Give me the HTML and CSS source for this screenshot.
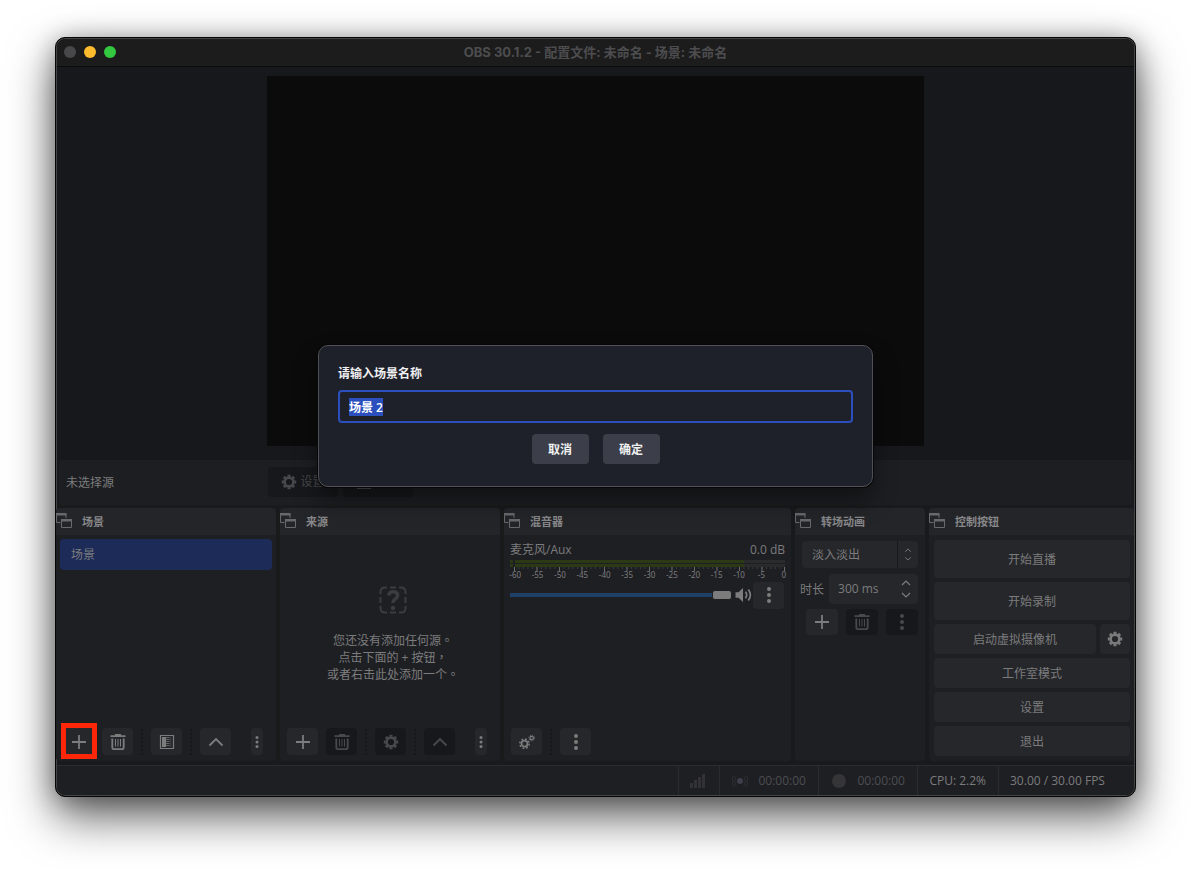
FILE: index.html
```html
<!DOCTYPE html>
<html lang="zh-CN">
<head>
<meta charset="utf-8">
<title>OBS 30.1.2</title>
<link rel="stylesheet" href="styles.css">
</head>
<body>
<svg class="sprite" aria-hidden="true">
  <symbol id="i-plus" viewBox="0 0 16 16"><path d="M8 1v14M1 8h14" fill="none" stroke="currentColor" stroke-width="1.8"/></symbol>
  <symbol id="i-trash" viewBox="0 0 16 16"><path d="M.5 2.2h15M5 1h6" fill="none" stroke="currentColor" stroke-width="1.8"/><path d="M2.3 4.5v9q0 1.7 1.7 1.7h8q1.7 0 1.7-1.7v-9" fill="none" stroke="currentColor" stroke-width="1.8"/><path d="M5.5 5v7.5M8 5v7.5M10.500 5v7.5" fill="none" stroke="currentColor"/></symbol>
  <symbol id="i-filter" viewBox="0 0 16 16"><path d="M1.500 1.500h13v13h-13z" fill="none" stroke="currentColor" stroke-width="1.200"/><path d="M3 3h4v10H3z" fill="currentColor"/><path d="M7.500 3v10M9.500 3v10" stroke="currentColor" stroke-dasharray="1 1" stroke-width="2" opacity=".7"/><path d="M11.500 3v10" stroke="currentColor" opacity=".3"/></symbol>
  <symbol id="i-up" viewBox="0 0 16 16"><path d="M1.500 11.500 8 5l6.500 6.500" fill="none" stroke="currentColor" stroke-width="1.800"/></symbol>
  <symbol id="i-dots" viewBox="0 0 16 16"><circle cx="8" cy="2" r="2" fill="currentColor"/><circle cx="8" cy="8" r="2" fill="currentColor"/><circle cx="8" cy="14" r="2" fill="currentColor"/></symbol>
  <symbol id="i-gear" viewBox="0 0 16 16"><circle cx="8" cy="8" r="4.400" fill="none" stroke="currentColor" stroke-width="2.600"/><path d="M8 .8v2M8 13.200v2M.8 8h2M13.200 8h2M2.900 2.900l1.400 1.400M11.700 11.700l1.400 1.400M2.900 13.100l1.400-1.400M11.700 4.300l1.400-1.400" stroke="currentColor" stroke-width="3"/></symbol>
  <symbol id="i-gears" viewBox="0 0 16 16"><circle cx="5.500" cy="9.700" r="3" fill="none" stroke="currentColor" stroke-width="1.800"/><circle cx="5.500" cy="9.700" r="4.700" fill="none" stroke="currentColor" stroke-width="1.500" stroke-dasharray="1.850 1.840"/><circle cx="12.700" cy="4" r="1.700" fill="none" stroke="currentColor" stroke-width="1.200"/><circle cx="12.700" cy="4" r="2.800" fill="none" stroke="currentColor" stroke-width="1" stroke-dasharray="1.100 1.100"/></symbol>
  <symbol id="i-float" viewBox="0 0 16 16"><path d="M4.500 9.500H.5V1h9.500v4" fill="none" stroke="currentColor"/><path d="M0 0h10.500v2.500H0z" fill="currentColor"/><path d="M5.500 7h10v7.500h-10z" fill="none" stroke="currentColor"/><path d="M5 6h11v2.500H5z" fill="currentColor"/></symbol>
  <symbol id="i-speaker" viewBox="0 0 16 16"><path d="M0 5.200h3L7.500 1v14L3 10.800H0z" fill="currentColor"/><path d="M10 4.800q2.400 3.200 0 6.400M12.800 2.500q4.200 5.500 0 11" fill="none" stroke="currentColor" stroke-width="1.700"/></symbol>
  <symbol id="i-missing" viewBox="0 0 28 28"><path d="M1.500 8V6q0-4.500 4.500-4.500h2M11 1.500h6M20 1.500h2q4.500 0 4.500 4.500v2M26.500 11v6M26.500 20v2q0 4.500-4.500 4.500h-2M17 26.500h-6M8 26.500H6q-4.500 0-4.500-4.500v-2M1.500 17v-6" fill="none" stroke="currentColor" stroke-width="2"/><path d="M9.700 9.500q.5-3.800 4.300-3.800 4.600 0 4.600 3.800 0 2-2.300 3.600-2.300 1.500-2.300 3.900" fill="none" stroke="currentColor" stroke-width="3.500"/><circle cx="14" cy="22" r="2.200" fill="currentColor"/></symbol>
  <symbol id="i-updown" viewBox="0 0 8 14"><path d="M1 4l3-3 3 3M1 10l3 3 3-3" fill="none" stroke="currentColor"/></symbol>
  <symbol id="i-spin" viewBox="0 0 10 20"><path d="M1 6l4-4 4 4M1 14l4 4 4-4" fill="none" stroke="currentColor" stroke-width="1.200"/></symbol>
  <symbol id="i-bars" viewBox="0 0 16 14"><path d="M0 9h3v5H0zM4 6h3v8H4zM8 3h3v11H8zM12 0h3v14h-3z" fill="currentColor"/></symbol>
  <symbol id="i-live" viewBox="0 0 16 14"><circle cx="8" cy="7" r="3" fill="currentColor"/><path d="M4 2.500q-3 4.500 0 9M12 2.500q3 4.500 0 9M2 1q-3.500 6 0 12M14 1q3.500 6 0 12" fill="none" stroke="currentColor" opacity=".5"/></symbol>
</svg>

<main class="window">
  <header class="titlebar">
    <div class="lights"><i class="light"></i><i class="light light-min"></i><i class="light light-max"></i></div>
    <h1 class="title">OBS 30.1.2 - 配置文件: 未命名 - 场景: 未命名</h1>
  </header>

  <section class="preview"><div class="canvas"></div></section>

  <section class="context">
    <span class="context-name">未选择源</span>
    <button class="context-btn" disabled><svg class="icon"><use href="#i-gear"/></svg>设置</button>
    <button class="context-btn" disabled><svg class="icon"><use href="#i-filter"/></svg>滤镜</button>
  </section>

  <section class="docks">
    <section class="dock">
      <h2 class="dock-head"><svg class="icon"><use href="#i-float"/></svg><span class="dock-title">场景</span></h2>
      <ul class="scenes"><li class="scene">场景</li></ul>
      <div class="toolbar">
        <button class="tool marked" aria-label="添加场景"><svg class="icon"><use href="#i-plus"/></svg></button>
        <button class="tool" aria-label="移除场景"><svg class="icon"><use href="#i-trash"/></svg></button>
        <i class="sep"></i>
        <button class="tool" aria-label="场景滤镜"><svg class="icon"><use href="#i-filter"/></svg></button>
        <i class="sep"></i>
        <button class="tool" aria-label="上移"><svg class="icon"><use href="#i-up"/></svg></button>
        <button class="tool more" aria-label="更多"><svg class="icon-s"><use href="#i-dots"/></svg></button>
      </div>
    </section>

    <section class="dock">
      <h2 class="dock-head"><svg class="icon"><use href="#i-float"/></svg><span class="dock-title">来源</span></h2>
      <div class="empty">
        <svg class="empty-icon"><use href="#i-missing"/></svg>
        <p class="empty-text" lang="zh-TW">您还没有添加任何源。<br>点击下面的 + 按钮，<br>或者右击此处添加一个。</p>
      </div>
      <div class="toolbar">
        <button class="tool" aria-label="添加源"><svg class="icon"><use href="#i-plus"/></svg></button>
        <button class="tool" aria-label="移除源" disabled><svg class="icon"><use href="#i-trash"/></svg></button>
        <i class="sep"></i>
        <button class="tool" aria-label="源属性" disabled><svg class="icon"><use href="#i-gear"/></svg></button>
        <i class="sep"></i>
        <button class="tool" aria-label="上移" disabled><svg class="icon"><use href="#i-up"/></svg></button>
        <button class="tool more" aria-label="更多"><svg class="icon-s"><use href="#i-dots"/></svg></button>
      </div>
    </section>

    <section class="dock">
      <h2 class="dock-head"><svg class="icon"><use href="#i-float"/></svg><span class="dock-title">混音器</span></h2>
      <div class="mixer">
        <div class="mixer-row"><label for="vol">麦克风/Aux</label><span>0.0 dB</span></div>
        <div class="meter"></div>
        <div class="meter"></div>
        <div class="ticks"></div>
        <div class="scale"><span>-60</span><span>-55</span><span>-50</span><span>-45</span><span>-40</span><span>-35</span><span>-30</span><span>-25</span><span>-20</span><span>-15</span><span>-10</span><span>-5</span><span>0</span></div>
        <div class="volume">
          <input class="slider" id="vol" type="range" min="0" max="100" value="100">
          <svg class="speaker"><use href="#i-speaker"/></svg>
          <button class="tool" aria-label="音频选项"><svg class="icon"><use href="#i-dots"/></svg></button>
        </div>
      </div>
      <div class="toolbar">
        <button class="tool" aria-label="高级音频属性"><svg class="icon"><use href="#i-gears"/></svg></button>
        <i class="sep"></i>
        <button class="tool" aria-label="混音器菜单"><svg class="icon"><use href="#i-dots"/></svg></button>
      </div>
    </section>

    <section class="dock">
      <h2 class="dock-head"><svg class="icon"><use href="#i-float"/></svg><span class="dock-title">转场动画</span></h2>
      <div class="transition">
        <div class="combo">
          <select class="combo-select" aria-label="转场动画"><option>淡入淡出</option></select>
          <svg class="combo-arrows"><use href="#i-updown"/></svg>
        </div>
        <div class="duration">
          <label for="dur">时长</label>
          <div class="spin"><input class="spin-input" id="dur" type="text" value="300 ms"><svg class="spin-arrows"><use href="#i-spin"/></svg></div>
        </div>
        <div class="transition-tools">
          <button class="tool" aria-label="添加转场"><svg class="icon"><use href="#i-plus"/></svg></button>
          <button class="tool" aria-label="移除转场" disabled><svg class="icon"><use href="#i-trash"/></svg></button>
          <button class="tool" aria-label="转场选项" disabled><svg class="icon"><use href="#i-dots"/></svg></button>
        </div>
      </div>
    </section>

    <section class="dock">
      <h2 class="dock-head"><svg class="icon"><use href="#i-float"/></svg><span class="dock-title">控制按钮</span></h2>
      <div class="controls">
        <button class="control tall">开始直播</button>
        <button class="control tall">开始录制</button>
        <div class="control-row"><button class="control">启动虚拟摄像机</button><button class="control square" aria-label="虚拟摄像机设置"><svg class="icon"><use href="#i-gear"/></svg></button></div>
        <button class="control">工作室模式</button>
        <button class="control">设置</button>
        <button class="control">退出</button>
      </div>
    </section>
  </section>

  <footer class="status">
    <div class="cell signal"><svg class="status-icon"><use href="#i-bars"/></svg></div>
    <div class="cell timer"><svg class="status-icon live"><use href="#i-live"/></svg>00:00:00</div>
    <div class="cell timer"><i class="record"></i>00:00:00</div>
    <div class="cell">CPU: 2.2%</div>
    <div class="cell fps">30.00 / 30.00 FPS</div>
  </footer>

  <div class="overlay">
    <form class="dialog" role="dialog">
      <label class="dialog-label" for="scene-name">请输入场景名称</label>
      <input class="dialog-input" id="scene-name" type="text" value="场景 2">
      <div class="dialog-actions">
        <button class="dialog-btn" type="button">取消</button>
        <button class="dialog-btn" type="button">确定</button>
      </div>
    </form>
  </div>
</main>
<script src="script.js"></script>
</body>
</html>
```
FILE: styles.css
```css
* { box-sizing: border-box; }
body {
  margin: 0;
  padding: 37px 55px 73px;
  background: #fff;
  font: 12px/18px "Open Sans", "Noto Sans CJK SC", sans-serif;
  color: #7c7c7d;
}
button, input, select { font: inherit; color: inherit; border: 0; margin: 0; }
button { display: flex; align-items: center; justify-content: center; padding: 0; }
.sprite { position: absolute; width: 0; height: 0; }
.icon { width: 16px; height: 16px; flex: none; }

.window {
  position: relative;
  display: flex;
  flex-direction: column;
  min-height: calc(100vh - 110px);
  border: 1px solid #050505;
  border-radius: 10px;
  background: #191a1b;
  box-shadow: inset 0 0 0 1px #434445, 0 20px 46px rgba(0, 0, 0, .62), 0 2px 24px rgba(0, 0, 0, .3);
}

.titlebar {
  display: grid;
  grid-template-columns: 1fr auto 1fr;
  align-items: center;
  height: 28px;
  padding: 0 7px 2px;
  margin: 1px 1px 0;
  border-bottom: 1px solid #0c0c0c;
  border-radius: 9px 9px 0 0;
  background: #1c1c1c;
}
.lights { display: flex; gap: 8px; }
.light { width: 12px; height: 12px; border-radius: 50%; background: #48484a; }
.light-min { background: #fdbc2e; }
.light-max { background: #34c840; }
.title { margin: 0; font: bold 13px/20px Inter, "Noto Sans CJK SC", sans-serif; color: #4d4d50; }

.preview { flex: 1; display: flex; justify-content: center; align-items: flex-start; margin: 0 1px; padding: 9px 0 14px; background: #17181c; }
.canvas { width: 61%; aspect-ratio: 16 / 9; background: #0b0b0b; }

.context { display: flex; align-items: center; gap: 5px; height: 45px; margin: 0 3px 3px; padding: 0 7px; border-radius: 4px; background: #1d1e21; }
.context-name { width: 197px; padding-top: 2px; }
.context-btn { width: 70px; height: 30px; gap: 3px; border-radius: 4px; background: #17181b; color: #47494d; }

.docks { display: grid; grid-template-columns: 220fr 220fr 287fr 130fr 205fr; gap: 4px; margin: 0 1px 4px 0; }
.dock { min-width: 0; min-height: 253px; display: flex; flex-direction: column; border-radius: 4px; background: #1e1f23; }
.dock-head { display: flex; align-items: center; gap: 10px; height: 27px; margin: 0; font-size: 11px; line-height: 18px; font-weight: bold; border-radius: 4px 4px 0 0; background: #242529; color: #88888a; }
.dock-head .icon { color: #68696b; }
.dock-title { padding-top: 2px; }

.scenes { list-style: none; flex: 1; margin: 0; padding: 4px; }
.scene { height: 31px; padding: 0 11px; line-height: 31px; border-radius: 4px; background: #1d2b58; }

.toolbar { display: flex; align-items: center; height: 38px; padding: 0 7px; margin-top: auto; color: #7c7c7d; }
.tool { position: relative; width: 31px; height: 27px; border-radius: 4px; background: #26272b; }
.tool:disabled { background: #17181b; color: #47494d; }
.tool + .tool { margin-left: 8px; }
.tool + .more { width: 12px; margin-left: 20px; }
.icon-s { width: 12px; height: 12px; }
.sep { height: 26px; margin: 0 8px; border-left: 2px dotted #17181b; }
.marked::after { content: ""; position: absolute; inset: -5px -3px -4px -2px; border: 5px solid #fb2708; }

.empty { flex: 1; display: flex; flex-direction: column; align-items: center; padding: 51px 0 0 6px; }
.empty-icon { width: 28px; height: 28px; color: #3b3c3f; }
.empty-text { margin: 18px 0 0; text-align: center; line-height: 17px; font-family: "Open Sans", "Noto Sans CJK TC", sans-serif; }

.mixer { padding: 6px 6px 0; }
.mixer-row { display: flex; justify-content: space-between; }
.meter { height: 3px; margin-top: 1px; background: linear-gradient(to right, #2b3a15 3px, #1e1f23 3px, #1e1f23 5px, transparent 5px), linear-gradient(to right, #2b3a15 85%, #292c2b 85%); }
.ticks {
  height: 4px;
  margin-left: 4px;
  border-right: 1px solid #6b6b6c;
  background:
    linear-gradient(to right, #6b6b6c 1px, transparent 1px) 0 0 / calc(100% / 12) 4px repeat-x,
    linear-gradient(to right, #3b3c3f 1px, transparent 1px) 0 0 / calc(100% / 60) 2px repeat-x;
}
.scale { display: grid; grid-template-columns: repeat(13, 1fr); margin: 0 -10px 0 -6px; text-align: center; font: 8px/8px "Noto Sans", sans-serif; }
.volume { display: flex; align-items: center; padding: 3px 1px 0 0; }
.slider { flex: 1; min-width: 0; height: 16px; appearance: none; background: linear-gradient(#1f4066, #1f4066) center / 100% 4px no-repeat; border-radius: 2px; }
.slider::-webkit-slider-thumb { appearance: none; width: 20px; height: 10px; border: 1px solid #1e1f23; border-radius: 3px; background: #7c7c7d; }
.speaker { width: 17px; height: 16px; margin: 0 1px 0 3px; }

.transition { display: flex; flex-direction: column; gap: 6px; padding: 6px 7px 0; }
.combo { position: relative; height: 27px; }
.combo-select { appearance: none; width: 100%; height: 27px; padding: 2px 10px 0; border-radius: 4px; background: linear-gradient(#17181b, #17181b) right 20px top / 1px 100% no-repeat #26272b; }
.combo-arrows { position: absolute; right: 6px; top: 7px; width: 8px; height: 13px; }
.duration { display: flex; align-items: center; justify-content: space-between; gap: 5px; margin-left: -2px; }
.duration label { flex: none; padding-top: 2px; }
.spin { flex: 1; min-width: 0; display: flex; align-items: center; height: 30px; padding: 0 7px 0 9px; border-radius: 4px; background: #26272b; }
.spin-input { flex: 1; min-width: 0; padding: 0; background: none; }
.spin-arrows { width: 10px; height: 20px; flex: none; }
.transition-tools { display: flex; justify-content: flex-end; margin-top: -1px; }
.transition-tools .tool { width: 32px; height: 26px; }

.controls { display: flex; flex-direction: column; gap: 4px; padding: 5px 4px 5px 5px; }
.control { flex: 1 0 auto; height: 30px; padding-top: 2px; border-radius: 4px; background: #26272b; }
.tall { height: 38px; }
.control-row { display: flex; gap: 4px; }
.square { flex: none; width: 30px; padding-top: 0; }

.status { display: flex; justify-content: flex-end; height: 30px; margin: 0 1px 1px; border-top: 1px solid #292b2f; border-radius: 0 0 9px 9px; background: #1e1f23; }
.cell { display: flex; align-items: center; padding: 1px 12px 0 11px; border-left: 1px solid #292b2f; }
.signal { width: 41px; color: #323234; }
.timer { gap: 10px; width: 99px; padding-left: 12px; color: #4c4d50; }
.status-icon { width: 16px; height: 14px; flex: none; }
.live { color: #3d3e47; }
.record { width: 14px; height: 14px; margin: 0 1px; border-radius: 50%; background: #353436; }
.fps { width: 136px; }

.overlay { position: absolute; inset: 0; display: flex; justify-content: center; align-items: flex-start; padding-top: 307px; }
.dialog { width: 555px; max-width: 90%; padding: 19px 19px 22px; border: 1px solid #505156; border-radius: 10px; background: #1f212a; color: #f0f0f2; font-weight: 600; box-shadow: 0 0 0 1px #070707, 0 14px 24px rgba(0, 0, 0, .4); }
.dialog-label { display: block; line-height: 18px; }
.dialog-input { display: block; width: 100%; height: 33px; margin: 7px 0 11px; padding: 0 9px; border: 2px solid #2b50bd; border-radius: 4px; outline: 0; background: #1f212a; }
.dialog-input::selection { background: #2b50bd; color: #fff; }
.dialog-actions { display: flex; justify-content: center; gap: 14px; }
.dialog-btn { width: 57px; height: 30px; padding-top: 2px; border-radius: 4px; background: #3c3f49; }
```
FILE: script.js
```js
const sceneName = document.getElementById("scene-name");
sceneName.focus();
sceneName.select();
```
